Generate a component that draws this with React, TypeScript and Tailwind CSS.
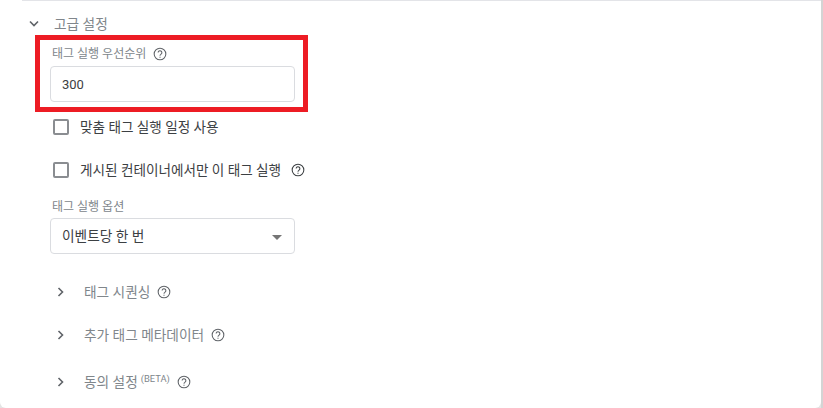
import React from 'react';

const FONT = "font-['Roboto','Noto_Sans_CJK_KR',sans-serif]";

function HelpIcon({ className = '' }: { className?: string }) {
  return (
    <svg viewBox="0 0 24 24" className={`h-[14px] w-[14px] shrink-0 ${className}`} fill="none" stroke="currentColor">
      <circle cx="12" cy="12" r="10" strokeWidth="1.8" />
      <path d="M8.8 9.6a3.2 3.2 0 1 1 5 2.6c-1.1.8-1.8 1.4-1.8 2.8" strokeWidth="1.8" />
      <path d="M12 16.6v2" strokeWidth="1.8" />
    </svg>
  );
}

function ChevronDown() {
  return (
    <svg viewBox="0 0 12 8" className="h-2 w-3 text-[#5f6368]" fill="none" stroke="currentColor" strokeWidth="1.6">
      <path d="M2 1.5 6 5.5 10 1.5" />
    </svg>
  );
}

function ChevronRight() {
  return (
    <svg viewBox="0 0 8 12" className="h-3 w-2 text-[#5f6368]" fill="none" stroke="currentColor" strokeWidth="1.6">
      <path d="M1.5 2 5.5 6 1.5 10" />
    </svg>
  );
}

function Checkbox() {
  return <span className="h-4 w-4 rounded-[2px] border-2 border-[#8a8d91] bg-white" />;
}

function CollapsedRow({ label, beta, className }: { label: string; beta?: boolean; className: string }) {
  return (
    <div className={`flex items-center ${className}`}>
      <span className="flex w-[27px] justify-start">
        <ChevronRight />
      </span>
      <span className="text-[13.7px] leading-5 text-[#80868b]">{label}</span>
      {beta && <span className="mb-[7px] ml-[3px] text-[9.4px] leading-3 text-[#80868b]">(BETA)</span>}
      <HelpIcon className="ml-[7px] text-[#5f6368]" />
    </div>
  );
}

export default function App() {
  return (
    <div className={`h-[408px] w-[823px] overflow-hidden bg-[#e4e4e4] ${FONT}`}>
      <div className="h-[408px] border-r-[2px] border-[#d4d4d4]">
        <div className="h-full rounded-b-[6px] bg-white pl-[2px]">
          <div className="relative h-full pt-[14px] pl-[26px]">
            <div className="absolute top-0 right-0 left-[20px] h-[1px] bg-[#e3e4e8]" />

            {/* Advanced settings */}
            <div className="flex h-5 items-center">
              <span className="flex w-[26px] items-center">
                <ChevronDown />
              </span>
              <span className="text-[13.7px] leading-5 text-[#80868b]">고급 설정</span>
            </div>

            <div className="relative mt-[13px] ml-[22px] w-[245px]">
              <div className="flex h-[14px] items-center pl-[2px]">
                <span className="text-[12px] leading-[14px] text-[#80868b]">태그 실행 우선순위</span>
                <HelpIcon className="ml-[7px] text-[#5f6368]" />
              </div>
              <div className="mt-[5px] flex h-9 items-center rounded-[4px] border border-[#dadce0] pt-[1px] pl-[11px] text-[13px] text-[#3c4043]">
                300
              </div>
              {/* red highlight around the priority field */}
              <div className="absolute -top-[12px] -right-[13px] -bottom-[10px] -left-[15px] border-[5px] border-[#ed1c24]" />
            </div>

            <div className="mt-[17px] ml-[25px] flex h-4 items-center">
              <Checkbox />
              <span className="ml-[11px] text-[13.6px] text-[#3c4043]">맞춤 태그 실행 일정 사용</span>
            </div>

            <div className="mt-[27px] ml-[25px] flex h-4 items-center">
              <Checkbox />
              <span className="ml-[11px] text-[13.6px] text-[#3c4043]">게시된 컨테이너에서만 이 태그 실행</span>
              <HelpIcon className="ml-[10px] text-[#3c4043]" />
            </div>

            <div className="mt-[22px] ml-[22px] h-[14px] pl-[2px] text-[12px] leading-[14px] text-[#80868b]">태그 실행 옵션</div>
            <div className="mt-[4px] ml-[22px] flex h-9 w-[245px] items-center justify-between rounded-[4px] border border-[#dadce0] pr-[12px] pl-[11px] text-[13.7px] text-[#3c4043]">
              <span>이벤트당 한 번</span>
              <span className="mt-[2px] h-0 w-0 border-x-[5px] border-t-[5px] border-x-transparent border-t-[#757575]" />
            </div>

            <CollapsedRow label="태그 시퀀싱" className="mt-[28px] ml-[29px] h-5" />
            <CollapsedRow label="추가 태그 메타데이터" className="mt-[23px] ml-[29px] h-5" />
            <CollapsedRow label="동의 설정" beta className="mt-[27px] ml-[29px] h-5" />
          </div>
        </div>
      </div>
    </div>
  );
}
